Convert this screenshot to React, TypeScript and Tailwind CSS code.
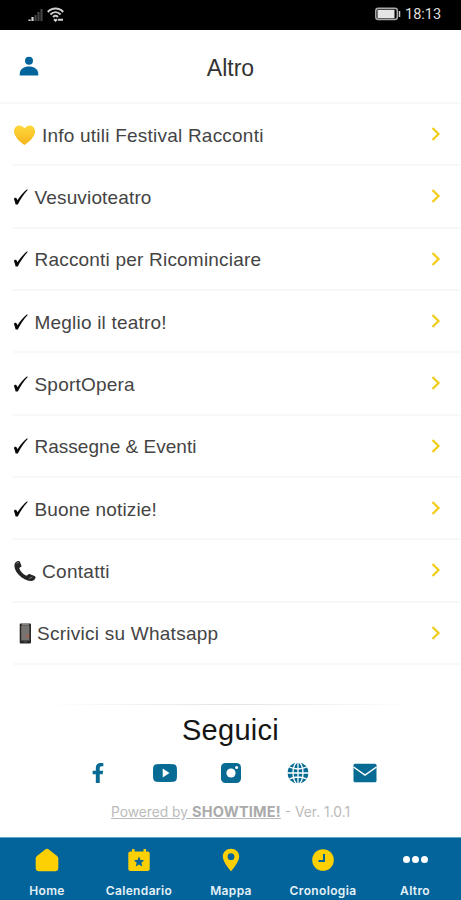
import React from 'react';
import { FaFacebookF } from 'react-icons/fa';
import { IoLogoYoutube } from 'react-icons/io5';

type RowIcon = 'heart' | 'check' | 'phone' | 'mobile';

interface MenuItem {
  icon: RowIcon;
  label: string;
  className: string;
}

const menuItems: MenuItem[] = [
  { icon: 'heart', label: 'Info utili Festival Racconti', className: 'ml-[6px] tracking-[0.22px]' },
  { icon: 'check', label: 'Vesuvioteatro', className: 'ml-[6.5px] tracking-[0.15px]' },
  { icon: 'check', label: 'Racconti per Ricominciare', className: 'ml-[6.5px] tracking-[0.2px]' },
  { icon: 'check', label: 'Meglio il teatro!', className: 'ml-[6.5px] tracking-[0.2px]' },
  { icon: 'check', label: 'SportOpera', className: 'ml-[6.5px] tracking-[0.2px]' },
  { icon: 'check', label: 'Rassegne & Eventi', className: 'ml-[6.5px] tracking-[0.02px]' },
  { icon: 'check', label: 'Buone notizie!', className: 'ml-[6.5px] tracking-[0.15px]' },
  { icon: 'phone', label: 'Contatti', className: 'ml-[6px] tracking-[0.3px]' },
  { icon: 'mobile', label: 'Scrivici su Whatsapp', className: 'ml-[5px] tracking-[0.25px]' },
];

const ItemIcon: React.FC<{ icon: RowIcon }> = ({ icon }) => {
  if (icon === 'heart') {
    return (
      <svg width="23" height="22" viewBox="0 0 23 22" className="mt-[2px] shrink-0">
        <defs>
          <linearGradient id="heart" x1="0" y1="0" x2="0" y2="1">
            <stop offset="0" stopColor="#ffd83c" />
            <stop offset="1" stopColor="#f5b51c" />
          </linearGradient>
        </defs>
        <path d="M11.500 21C8 18.800 1.300 13.500 1 7.500.9 4 3.200 1.400 6.200 1.400c2.500 0 4.400 1.400 5.300 3.200.9-1.800 2.800-3.200 5.300-3.200 3 0 5.400 2.600 5.300 6.100-.3 6-7.100 11.300-10.600 13.500z" fill="url(#heart)" />
      </svg>
    );
  }
  if (icon === 'phone') {
    return (
      <svg width="23" height="22" viewBox="0 0 23 22" className="mt-[2px] shrink-0">
        <path d="M1.500 4.500C2 2.300 3.700 1 5.500.9c.8 0 1.200.5 1.500 1.200l1.300 3.300c.3.8.1 1.300-.6 1.700l-1.500.9c1 3.400 3.700 6.200 7.400 7.800l1.600-1.400c.6-.5 1.200-.6 1.900-.2l4.500 1.900c.9.500 1.100 1 .8 1.900-.7 2-2.500 3.200-4.700 3C9.500 20.300.6 11.800 1.500 4.500z" fill="#252525" />
        <path d="M3.400 3.200l2.500-.6M16 18.600l3.400-1.600" stroke="#777" strokeWidth="1" />
      </svg>
    );
  }
  if (icon === 'mobile') {
    return (
      <svg width="13" height="21" viewBox="0 0 13 21" className="ml-[6px] mt-px shrink-0">
        <rect x=".7" y=".5" width="11.300" height="20" rx="1" fill="#292827" />
        <rect x="2.200" y="3" width="8.200" height="14.500" fill="#777370" />
        <path d="M2.700 1.900h7.300" stroke="#bcbcbc" strokeWidth="1" />
        <path d="M4.700 19h3" stroke="#555" strokeWidth="1" />
        <path d="M6.800 12.500l2.700-1.300v3.300z" fill="#c1543f" />
      </svg>
    );
  }
  return (
    <svg width="15" height="18" viewBox="0 0 15 18" className="mt-px shrink-0">
      <path d="M1 11.300c.1-1.500 2-1.900 2.700-.8l.8 1.800C7.100 8.300 10 4.700 14.100 1.300l.6.700C10.700 6.300 7.600 11 4.800 16.500H2.600C2.200 14.700 1.700 13 1 11.300z" fill="#080808" />
    </svg>
  );
};

const StatusBar = () => (
  <header className="flex h-[30px] shrink-0 items-center justify-between bg-black pl-[28px] pr-[20px]">
    <div className="flex items-center gap-[3px] pt-px">
      <svg width="16" height="14" viewBox="0 0 16 14" className="mb-[2px]">
        <path d="M1.500 13v-1.500M4.500 13V9" stroke="#d5d5d5" strokeWidth="2.200" />
        <path d="M7.500 13V7M10.500 13V4M13.500 13V1" stroke="#444" strokeWidth="2.200" />
      </svg>
      <svg width="17" height="15" viewBox="0 0 17 15" fill="none" stroke="#d0d0d0" strokeWidth="1.900" className="mb-[3px]">
        <path d="M.8 5C5 .4 12 .4 16.200 5M3.400 7.500c3-3 7.200-3 10.200 0M6 10c1.500-1.400 3.500-1.400 5 0" />
        <path d="M7 12.300l1.500 1.400 1.500-1.400M11 12.800h5" />
      </svg>
    </div>
    <div className="flex items-center gap-1 text-[#dedede]">
      <svg width="26" height="14" viewBox="0 0 26 14" className="-mt-[2px]">
        <rect x=".8" y="1.300" width="21.500" height="11.200" rx="2.500" fill="none" stroke="#a8a8a8" strokeWidth="1.500" />
        <rect x="2.500" y="2.700" width="17" height="8.600" fill="#e5e5e5" />
        <path d="M24.500 4v6" stroke="#ccc" strokeWidth="1.500" />
      </svg>
      <span className="w-[36px] whitespace-nowrap font-['Roboto'] text-[14.500px] leading-[18px]">18:13</span>
    </div>
  </header>
);

const SocialLinks = () => (
  <div className="ml-[2px] mt-[14px] grid h-[24px] w-[333px] grid-cols-5 items-center justify-items-center text-[#076b93]">
    <FaFacebookF size={20} />
    <IoLogoYoutube size={24} />
    <svg width="20" height="20" viewBox="0 0 20 20">
      <rect width="20" height="20" rx="4.500" fill="currentColor" />
      <circle cx="10" cy="10" r="4.600" fill="#fff" />
      <circle cx="15.600" cy="4.500" r="1.500" fill="#fff" />
    </svg>
    <svg width="22" height="22" viewBox="0 0 22 22">
      <circle cx="11" cy="11" r="10.500" fill="currentColor" />
      <g fill="none" stroke="#fff" strokeWidth="1.300">
        <path d="M11 0v22M0 11h22M2.500 5.200c5.500 2.300 11.500 2.300 17 0M2.500 16.800c5.500-2.300 11.500-2.300 17 0" />
        <ellipse cx="11" cy="11" rx="5" ry="11" />
      </g>
    </svg>
    <svg width="24" height="20" viewBox="0 0 24 20">
      <rect width="23" height="18.500" x=".5" y=".8" rx="1.500" fill="currentColor" />
      <path d="M.5 4L12 12.200 23.500 4" fill="none" stroke="#fff" strokeWidth="1.500" />
    </svg>
  </div>
);

const tabs = [
  {
    label: 'Home',
    icon: <path d="M10.200 1.500c1-.9 2.600-.9 3.600 0l8 6.200c1 .8 1.500 1.800 1.500 3V20c0 2-1.300 3.300-3.300 3.300H4C2 23.300.7 22 .7 20v-9.300c0-1.200.5-2.200 1.500-3z" />,
  },
  {
    label: 'Calendario',
    icon: (
      <>
        <path d="M5 1h2.500v2.500h9V1H19v2.500h1.500c1.300 0 2.200.9 2.200 2.200v15.100c0 1.300-.9 2.200-2.200 2.200h-17c-1.300 0-2.200-.9-2.200-2.200V5.700c0-1.300.9-2.200 2.200-2.200H5z" />
        <path d="M12 8.500l1.500 3.400 3.700.4-2.800 2.500.8 3.700L12 16.600l-3.200 1.900.8-3.700-2.800-2.500 3.700-.4z" fill="#03649b" />
      </>
    ),
  },
  {
    label: 'Mappa',
    icon: <path fillRule="evenodd" d="M12 .8c-4.500 0-8.200 3.300-8.200 7.700C3.800 14.300 12 23.300 12 23.300s8.200-9 8.200-14.800C20.200 4.100 16.500.8 12 .8zm0 4.500a3.400 3.400 0 110 6.800 3.400 3.400 0 010-6.800z" />,
  },
  {
    label: 'Cronologia',
    icon: (
      <>
        <circle cx="12" cy="12" r="10.800" />
        <path d="M13 6v7H7.500" fill="none" stroke="#03649b" strokeWidth="2" />
      </>
    ),
  },
  {
    label: 'Altro',
    icon: <path fill="#fff" d="M0 11.500a3.500 3.500 0 117 0 3.500 3.500 0 01-7 0zm9 0a3.500 3.500 0 117 0 3.500 3.500 0 01-7 0zm9 0a3.500 3.500 0 117 0 3.500 3.500 0 01-7 0z" />,
  },
];

export default function App() {
  return (
    <div className="flex h-[900px] w-[461px] flex-col overflow-hidden bg-white font-['Liberation_Sans',sans-serif]">
      <StatusBar />
      <div className="grid h-[74px] shrink-0 grid-cols-[60px_1fr_60px] items-center border-b-2 border-[#f8f8f8]">
        <svg width="20" height="20" viewBox="0 0 20 20" fill="#03649b" className="ml-[19px]">
          <circle cx="10" cy="4.800" r="4" />
          <path d="M.7 19.500v-1.300C.7 13 5 10.500 10 10.500s9.300 2.500 9.300 7.700v1.300z" />
        </svg>
        <h1 className="pt-[3px] text-center text-[23px] leading-[30px] text-[#333]">Altro</h1>
      </div>

      <ul className="flex h-[561px] shrink-0 flex-col pl-[13px]">
        {menuItems.map((item) => (
          <li key={item.label} className="flex flex-1 items-center border-b-2 border-[#f8f8f8]">
            <ItemIcon icon={item.icon} />
            <span className={`flex-1 whitespace-nowrap pt-[3px] text-[19px] leading-[24px] text-[#444] ${item.className}`}>{item.label}</span>
            <svg width="10" height="14" viewBox="0 0 10 14" fill="none" className="mr-[20px]">
              <path d="M1.500 1l6 6-6 6" stroke="#f2cd1c" strokeWidth="2.300" />
            </svg>
          </li>
        ))}
      </ul>

      <section className="flex flex-1 flex-col items-center pt-[39px]">
        <div className="h-px w-[370px] bg-gradient-to-r from-white via-[#e4e4e4] to-white" />
        <h2 className="mt-[8px] text-[29px] leading-[34px] tracking-[0.3px] text-[#151515]">Seguici</h2>
        <SocialLinks />
        <p className="mt-[17px] whitespace-nowrap font-['Inter'] text-[13.800px] leading-[20px] text-[#bbb]">
          <span className="underline">Powered by <b className="text-[14.500px] tracking-[0.2px] text-[#aaa]">SHOWTIME!</b></span> - Ver. 1.0.1
        </p>
      </section>

      <nav className="grid h-[63px] shrink-0 grid-cols-5 border-t border-[#5eaac8] bg-[#03649b] pl-px">
        {tabs.map((tab) => (
          <div key={tab.label} className="flex flex-col items-center pt-[10px]">
            <svg width="24" height="24" viewBox="0 0 24 24" fill="#fdd004" className="overflow-visible">{tab.icon}</svg>
            <span className="mt-[11px] font-['Inter'] text-[12px] font-semibold leading-[16px] tracking-[0.35px] text-[#e4f1f7]">{tab.label}</span>
          </div>
        ))}
      </nav>
    </div>
  );
}
